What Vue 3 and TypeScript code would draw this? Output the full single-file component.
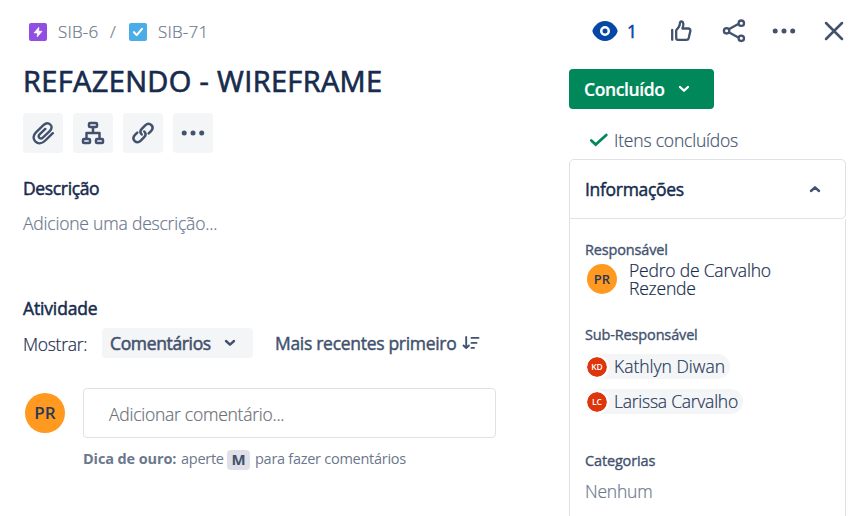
<script setup lang="ts">
import { ref } from 'vue'

interface Person {
  initials: string
  name: string
}

const subOwners = ref<Person[]>([
  { initials: 'KD', name: 'Kathlyn Diwan' },
  { initials: 'LC', name: 'Larissa Carvalho' },
])
const detailsOpen = ref(true)
</script>

<template>
  <div class="issue">
    <header class="topbar">
      <nav class="crumbs">
        <svg class="type" viewBox="0 0 18 18"><rect width="18" height="18" rx="2" fill="#904ee2" /><path d="M9.8 4.2v4h3.3L8.3 14V9.9H5z" fill="#fff" stroke="#fff" stroke-width=".6" stroke-linejoin="round" /></svg>
        <span class="key first">SIB-6</span>
        <span class="slash">/</span>
        <svg class="type" viewBox="0 0 18 18"><rect width="18" height="18" rx="2" fill="#4bade8" /><path d="M5 9.2l2.7 2.9L13 5.9" fill="none" stroke="#fff" stroke-width="2.1" stroke-linecap="round" stroke-linejoin="round" /></svg>
        <span class="key second">SIB-71</span>
      </nav>
      <div class="tools">
        <svg class="eye" viewBox="0 0 26 20"><path d="M13 0C5.2 0 .4 7.8.4 10S5.2 20 13 20s12.6-7.8 12.6-10S20.8 0 13 0z" fill="#0747a6" /><circle cx="13" cy="10" r="3.75" fill="none" stroke="#fff" stroke-width="2.5" /></svg>
        <span class="count">1</span>
        <svg class="like" viewBox="0 0 22 22" fill="none" stroke="#42526e" stroke-width="2.3" stroke-linejoin="round" stroke-linecap="round"><path d="M2.2 10v9.8" /><path d="M6.2 10.3q3.7-3.5 3.7-6.7c0-1.6.8-2.3 1.8-2.1 2 .4 2.1 3.7.7 7h5.7c1.7 0 2.6 1.2 2.2 2.8l-1.6 6.8c-.3 1.1-1 1.7-2.2 1.7H8c-1.2 0-1.8-.7-1.8-1.9z" /></svg>
        <svg class="share" viewBox="0 0 24 24" fill="none" stroke="#42526e" stroke-width="2.3"><path d="M6.8 10.3l9.5-5.2M6.8 13.2l9.5 5.2" /><circle cx="4.6" cy="11.8" r="2.7" /><circle cx="19.3" cy="4.2" r="2.7" /><circle cx="19.3" cy="19.3" r="2.7" /></svg>
        <svg class="more" viewBox="0 0 24 6" fill="#42526e"><circle cx="3.2" cy="3" r="2.5" /><circle cx="12" cy="3" r="2.5" /><circle cx="20.7" cy="3" r="2.5" /></svg>
        <svg class="close" viewBox="0 0 20 20"><path d="M2 2l16 16M18 2L2 18" stroke="#42526e" stroke-width="2.5" stroke-linecap="round" /></svg>
      </div>
    </header>

    <div class="columns">
      <main class="content">
        <h1>REFAZENDO - WIREFRAME</h1>
        <div class="actions">
          <button aria-label="Anexar"><svg viewBox="0 0 24 24" fill="none" stroke="#42526e" stroke-width="2.4" stroke-linecap="round" stroke-linejoin="round"><path d="M21.800 12.200l-7.500 7.300c-3 2.900-7 3.700-9.800 1.100-2.900-2.700-2.300-6.600.7-9.500l7.200-6.900c2.300-2.200 5-2.500 6.900-.7s1.700 4.400-.6 6.600l-6.600 6.300c-1.300 1.300-2.700 1.400-3.700.4s-.9-2.300.4-3.600l5.500-5.300" /></svg></button>
          <button aria-label="Subtarefas"><svg viewBox="0 0 24 24" fill="none" stroke="#42526e" stroke-width="2.5" stroke-linejoin="round"><rect x="8" y="2" width="8" height="4" rx="1" /><rect x="2" y="18" width="7" height="4" rx="1" /><rect x="15" y="18" width="7" height="4" rx="1" /><path d="M12 6v6M5.5 18v-6h13v6" /></svg></button>
          <button aria-label="Vincular"><svg viewBox="0 0 24 24" fill="none" stroke="#42526e" stroke-width="2.5" stroke-linecap="round"><path d="M10.7 13.5c-1.8-2-1.5-4.1.1-5.7l3.4-3.4c1.9-1.9 4.4-2 6.1-.4 1.7 1.7 1.5 4.2-.3 6.1l-2.3 2.3" /><path d="M13.3 10.5c1.8 2 1.5 4.1-.1 5.7l-3.4 3.4c-1.9 1.9-4.4 2-6.1.4-1.7-1.7-1.5-4.2.3-6.1l2.3-2.3" /></svg></button>
          <button aria-label="Mais ações"><svg viewBox="0 0 24 24" fill="#42526e"><circle cx="3.2" cy="12" r="2.5" /><circle cx="12" cy="12" r="2.5" /><circle cx="20.7" cy="12" r="2.5" /></svg></button>
        </div>

        <h2>Descrição</h2>
        <p class="placeholder">Adicione uma descrição...</p>

        <h2 class="activity">Atividade</h2>
        <div class="filters">
          <span class="show">Mostrar:</span>
          <button class="select"><span>Comentários</span><svg class="chev" viewBox="0 0 12 8"><path d="M2 2l4 3.7L10 2" fill="none" stroke="#42526e" stroke-width="2.4" stroke-linecap="round" stroke-linejoin="round" /></svg></button>
          <button class="sort"><span>Mais recentes primeiro</span><svg viewBox="0 0 18 14" fill="none" stroke="#42526e" stroke-width="1.9" stroke-linecap="round" stroke-linejoin="round"><path d="M4.2 1v11M1.5 9.5l2.7 2.7 2.7-2.7M9.5 1.9h7M9.5 6.9h5M9.5 11.9h2.5" /></svg></button>
        </div>

        <div class="comment">
          <span class="avatar large">PR</span>
          <div class="field">Adicionar comentário...</div>
        </div>
        <p class="tip"><b>Dica de ouro:</b><span class="press">aperte</span><kbd>M</kbd><span class="after">para fazer comentários</span></p>
      </main>

      <aside class="side">
        <button class="status"><span>Concluído</span><svg class="chev" viewBox="0 0 12 8"><path d="M2 2l4 3.7L10 2" fill="none" stroke="#fff" stroke-width="2.3" stroke-linecap="round" stroke-linejoin="round" /></svg></button>
        <div class="done"><svg viewBox="0 0 20 14"><path d="M2.3 7.5l4.4 4.1L17.3 2" fill="none" stroke="#00875a" stroke-width="2.7" stroke-linecap="round" /></svg><span>Itens concluídos</span></div>

        <section class="panel">
          <div class="panel-head" @click="detailsOpen = !detailsOpen">
            <span>Informações</span>
            <svg class="chev" viewBox="0 0 12 8"><path d="M2 6l4-3.7L10 6" fill="none" stroke="#42526e" stroke-width="2.4" stroke-linecap="round" stroke-linejoin="round" /></svg>
          </div>
          <div v-if="detailsOpen" class="panel-body">
            <h3>Responsável</h3>
            <div class="owner">
              <span class="avatar medium">PR</span>
              <div class="owner-name"><span>Pedro de Carvalho</span><span>Rezende</span></div>
            </div>
            <h3 class="sub-title">Sub-Responsável</h3>
            <ul class="chips">
              <li v-for="p in subOwners" :key="p.initials" class="chip" :class="p.initials.toLowerCase()">
                <span class="avatar small">{{ p.initials }}</span><span class="chip-name">{{ p.name }}</span>
              </li>
            </ul>
            <h3 class="cat-title">Categorias</h3>
            <p class="none">Nenhum</p>
          </div>
        </section>
      </aside>
    </div>
  </div>
</template>

<style>
body {
  background: #fff;
  overflow: hidden;
}
</style>

<style scoped>
.issue {
  width: 863px;
  height: 516px;
  overflow: hidden;
  box-sizing: border-box;
  font-family: 'Open Sans', 'Noto Sans', sans-serif;
  font-size: 17.5px;
  font-weight: 300;
  line-height: 24px;
  letter-spacing: -0.2px;
  color: #172b4d;
  white-space: nowrap;
  -webkit-text-stroke: 0.2px currentColor;
}
h1, h2, h3, p, ul { margin: 0; padding: 0; }
button { border: 0; padding: 0; font: inherit; letter-spacing: inherit; color: inherit; }
svg { display: block; flex: none; }
.topbar { display: flex; justify-content: space-between; height: 64px; padding: 0 19px 0 29px; }
.crumbs { display: flex; align-items: center; height: 64px; color: #6b778c; font-size: 17px; }
.type { width: 18px; height: 18px; }
.key { margin-left: 11px; }
.first { width: 40px; letter-spacing: 0.2px; }
.second { letter-spacing: 0.2px; }
.slash { width: 8px; margin: 0 11px 0 12px; }
.tools { display: flex; align-items: center; height: 62px; }
.eye { width: 26px; height: 20px; }
.count { width: 11px; margin: 0 0 0 9px; font-weight: 400; color: #0747a6; -webkit-text-stroke-width: 0.5px; }
.like { width: 22px; height: 22px; margin-left: 32px; }
.share { width: 24px; height: 24px; margin-left: 30px; }
.more { width: 24px; height: 6px; margin-left: 26px; }
.close { width: 20px; height: 20px; margin-left: 28px; }
.columns { display: flex; justify-content: space-between; padding: 0 17px 0 23px; }
.content { width: 473px; }
h1 { height: 36px; font-size: 29px; line-height: 34px; font-weight: 400; letter-spacing: 0.35px; -webkit-text-stroke-width: 0.7px; }
.actions { display: flex; gap: 10px; margin-top: 13px; }
.actions button { display: flex; align-items: center; justify-content: center; width: 40px; height: 40px; border-radius: 4px; background: #f4f5f7; }
.actions svg { width: 24px; height: 24px; }
h2 { height: 24px; margin-top: 24px; font-size: 17.5px; line-height: 22px; font-weight: 400; letter-spacing: -0.35px; -webkit-text-stroke-width: 0.5px; }
.placeholder { margin-top: 10px; color: #6b778c; }
.activity { margin-top: 62px; letter-spacing: -0.15px; }
.filters { display: flex; align-items: center; height: 30px; margin-top: 7px; }
.show { width: 79px; padding-top: 1px; letter-spacing: -0.3px; }
.select { display: flex; align-items: center; justify-content: space-between; width: 151px; height: 30px; padding: 0 17px 0 8px; border-radius: 4px; background: #f4f5f7; color: #42526e; font-weight: 400; letter-spacing: -0.35px; -webkit-text-stroke-width: 0.55px; }
.chev { width: 12px; height: 8px; }
.sort { display: flex; align-items: center; margin-left: 22px; background: none; color: #42526e; font-weight: 400; letter-spacing: -0.3px; -webkit-text-stroke-width: 0.45px; }
.sort span { width: 187px; text-align: left; }
.sort svg { width: 18px; height: 14px; }
.comment { display: flex; gap: 18px; margin-top: 30px; padding-left: 2px; align-items: center; }
.avatar { display: flex; align-items: center; justify-content: center; border-radius: 50%; flex: none; background: #ff991f; color: #253858; font-weight: 600; letter-spacing: 0; -webkit-text-stroke-width: 0; }
.large { width: 40px; height: 40px; font-size: 17px; }
.field { box-sizing: border-box; width: 413px; height: 50px; padding: 1px 0 0 25px; border: 1px solid #dfe1e6; border-radius: 4px; color: #6b6e76; line-height: 48px; letter-spacing: -0.25px; }
.tip { display: flex; align-items: center; height: 20px; margin: 12px 0 0 60px; color: #6b778c; font-size: 14.5px; line-height: 18px; font-weight: 400; letter-spacing: -0.27px; -webkit-text-stroke-width: 0; }
.tip b, .press, .after { height: 20px; }
.tip b { width: 98px; font-weight: 700; letter-spacing: -0.12px; }
.press { width: 46px; }
kbd { width: 23px; height: 20px; border-radius: 4px; background: #dfe1e6; color: #42526e; font: 700 15px/19px 'Open Sans', sans-serif; text-align: center; }
.after { margin-left: 5px; }
.side { width: 277px; padding-top: 5px; }
.status { display: flex; align-items: center; justify-content: space-between; width: 145px; height: 40px; padding: 0 24px 0 15px; border-radius: 4px; background: #00875a; color: #fff; font-weight: 600; letter-spacing: -0.4px; }
.done { display: flex; align-items: center; height: 24px; margin: 19px 0 0 20px; color: #42526e; }
.done svg { width: 20px; height: 14px; margin-right: 5px; }
.panel { margin-top: 7px; }
.panel-head { display: flex; align-items: center; justify-content: space-between; box-sizing: border-box; height: 60px; padding: 0 24px 0 15px; border: 1px solid #dfe1e6; border-radius: 5px 5px 5px 0; font-weight: 400; letter-spacing: -0.3px; -webkit-text-stroke-width: 0.45px; }
.panel-body { height: 310px; padding: 18px 15px 0; border: solid #dfe1e6; border-width: 0 1px; }
h3 { height: 24px; font-size: 14.5px; line-height: 26px; font-weight: 400; letter-spacing: -0.15px; color: #42526e; -webkit-text-stroke-width: 0.35px; }
.owner { display: flex; align-items: center; height: 36px; padding-left: 2px; }
.owner-name { display: flex; flex-direction: column; margin-left: 12px; line-height: 18px; }
.medium { width: 30px; height: 30px; font-size: 13px; }
.sub-title { margin-top: 25px; }
.chips { display: flex; flex-direction: column; gap: 10px; margin-top: 8px; list-style: none; }
.chip { display: flex; align-items: center; width: 145px; height: 25px; border-radius: 13px; background: #f4f5f7; color: #253858; letter-spacing: 0; }
.chip.lc { width: 158px; letter-spacing: -0.25px; }
.small { width: 20px; height: 20px; border: 2px solid #fff; background: #de350b; color: #fff; font-size: 8.5px; background-clip: padding-box; }
.chip-name { margin: -1px 0 0 5px; }
.cat-title { margin-top: 34px; }
.none { margin-top: 7px; color: #6b778c; }
</style>
